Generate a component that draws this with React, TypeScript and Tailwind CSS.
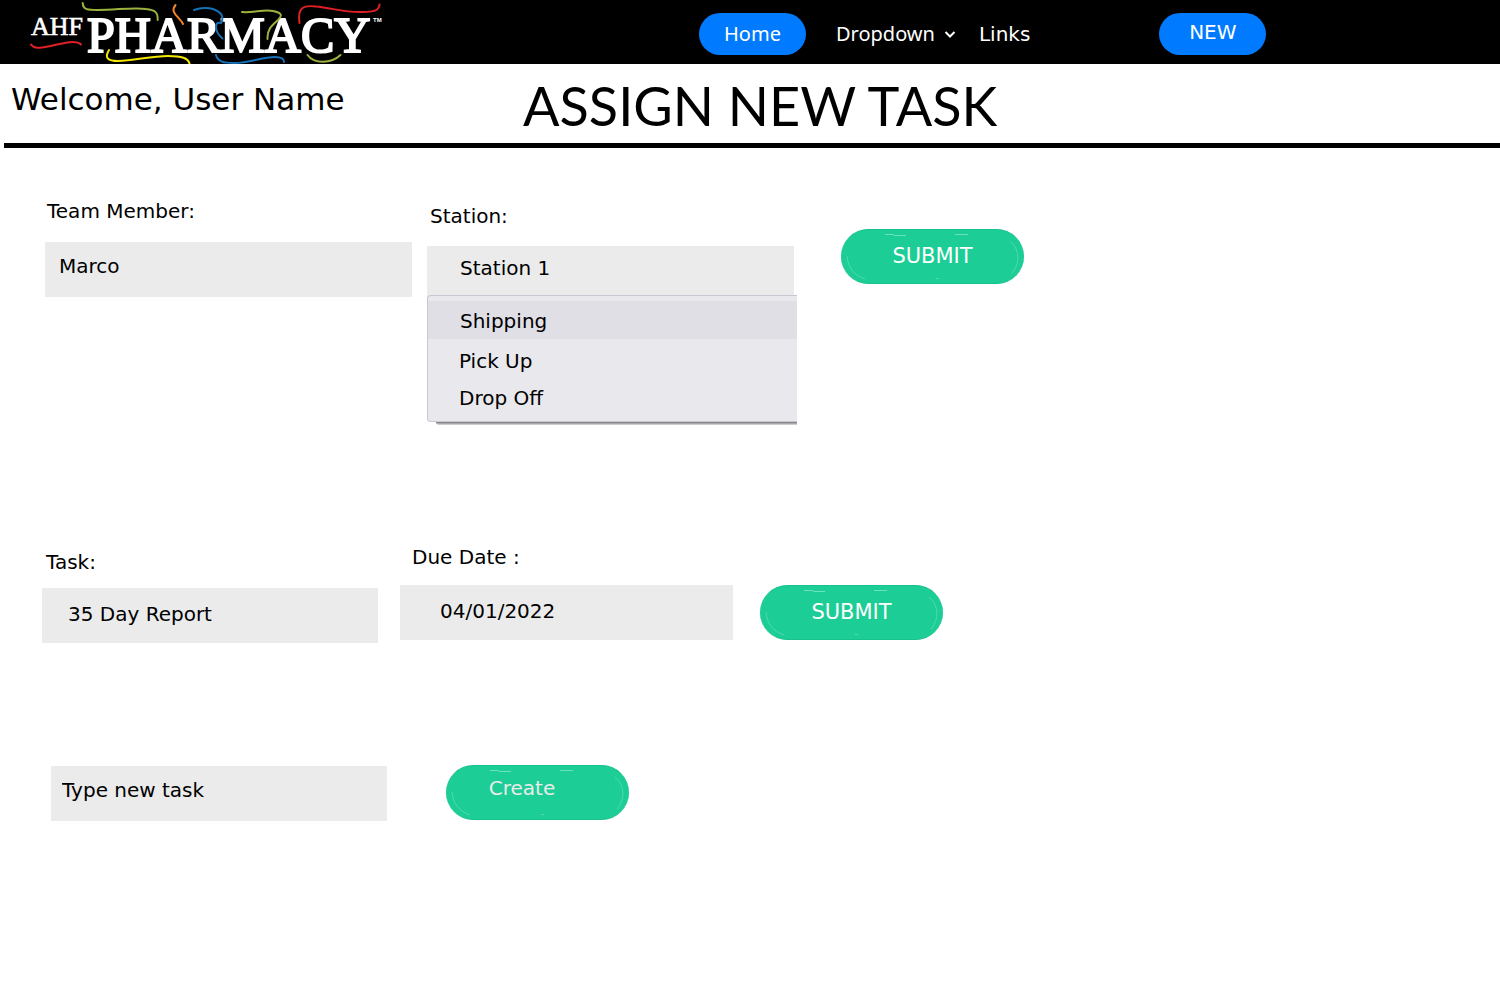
import type { ReactNode } from "react";

function Logo() {
  return (
    <svg
      role="img"
      aria-label="AHF Pharmacy"
      viewBox="0 0 360 64"
      className="h-16 w-[360px] shrink-0"
      fill="none"
      strokeLinecap="round"
      strokeWidth="2"
    >
      <g fill="#fff" stroke="#fff" fontFamily="'Liberation Serif', serif">
        <text x="1" y="35" fontSize="26" strokeWidth="0.6">AHF</text>
        <text x="57" y="52" fontSize="50" strokeWidth="2">PHARMACY</text>
      </g>
      <text x="343" y="22" fontSize="6" fontWeight="700" fill="#fff" fontFamily="'Liberation Sans', sans-serif">TM</text>
      <path stroke="#9bb23c" d="M52.700 3C53 10 58 10 68 10C86 10 104 7 116 9C125 10 128 12 127.700 20" />
      <path stroke="#e01f26" d="M1 44.500C4 49 10 48 18 46.500C30 44 45 39 51 44.500" />
      <path stroke="#f3e600" d="M79 50C74 58 78 61 88 61C104 61 120 56 138 56C152 56 158 58 159.500 63.500" />
      <path stroke="#f08326" d="M145.500 5C139 13 150 17 153 24" />
      <path stroke="#1672b8" d="M164 10C174 6 186 8 191 14C194 19 192 21 191 23C184 21 184 31 192.500 38.500" />
      <path stroke="#9bb23c" d="M212 12C223 13 234 9 243 11C253 13 252 16 248 20C241 26 237 30 237.500 39" />
      <path stroke="#e01f26" d="M269.500 23C267 7 274 5 286 6.500C302 8 316 13 333 12C343 12 349 11 349.500 4.500" />
      <path stroke="#1672b8" d="M186 55C188 62 194 63 204 63C220 63 232 57 245 57C251 57 254 58 254 62" />
      <path stroke="#9bb23c" d="M277.500 55C284 64 301 64 310.500 55" />
    </svg>
  );
}

function GreenButton({ children, className = "" }: { children: ReactNode; className?: string }) {
  return (
    <button
      type="button"
      className={`relative h-[55px] w-[183px] shrink-0 rounded-full border-y border-[#19c28c] bg-[#1ccd96] leading-6 ${className}`}
    >
      {children}
      <svg
        aria-hidden="true"
        viewBox="0 0 183 55"
        className="pointer-events-none absolute inset-x-0 -top-px h-[55px] w-full"
        fill="none"
        stroke="#7fe6c5"
        strokeWidth="1"
      >
        <path strokeOpacity="0.8" d="M44 5.500H53M53 6.500H65M114 5.500H127" />
        <path strokeOpacity="0.5" d="M6 27C7 39 13 46 24 50M169 12C178 19 180 34 171 44M95 49.500H98" />
      </svg>
    </button>
  );
}

function Field({
  id,
  label,
  value,
  className = "",
  labelClass = "",
  inputClass = "",
}: {
  id: string;
  label: string;
  value: string;
  className?: string;
  labelClass?: string;
  inputClass?: string;
}) {
  return (
    <div className={`flex min-w-0 flex-col ${className}`}>
      <label htmlFor={id} className={`text-xl leading-6 ${labelClass}`}>
        {label}
      </label>
      <input
        id={id}
        type="text"
        defaultValue={value}
        className={`h-[55px] w-full bg-[#ebebeb] text-xl leading-6 outline-none ${inputClass}`}
      />
    </div>
  );
}

export default function App() {
  return (
    <div className="min-h-screen bg-white font-['DejaVu_Sans',sans-serif] text-black">
      <header className="flex h-16 items-center bg-black pl-[30px] text-xl text-white">
        <Logo />
        <nav className="ml-[309px] flex flex-1 items-center pt-1">
          <a
            href="#home"
            className="flex h-[42px] w-[107px] shrink-0 items-center justify-center rounded-full bg-[#007bff] font-['Noto_Sans',sans-serif]"
          >
            Home
          </a>
          <button type="button" className="ml-[30px] flex items-center gap-2 font-['Noto_Sans',sans-serif]">
            Dropdown
            <svg aria-hidden="true" viewBox="0 0 14 14" className="size-3.5" fill="none" stroke="#fff" strokeWidth="2">
              <path d="M2.500 5L7 9.500L11.500 5" />
            </svg>
          </button>
          <a href="#links" className="ml-[22px]">
            Links
          </a>
          <a
            href="#new"
            className="ml-[129px] flex h-[42px] w-[107px] shrink-0 items-center justify-center rounded-full bg-[#007bff] pb-1"
          >
            NEW
          </a>
        </nav>
      </header>

      <div className="ml-1 flex h-[84px] items-start border-b-[5px] border-black">
        <p className="ml-[7px] w-[512px] pt-4 text-[31px] leading-[38px]">Welcome, User Name</p>
        <h1 className="pt-1.5 font-['Lato',sans-serif] text-[54px] leading-[72px]">ASSIGN NEW TASK</h1>
      </div>

      <main>
        <form className="flex items-start pt-[51px] pl-[45px]">
          <Field
            id="member"
            label="Team Member:"
            value="Marco"
            className="w-[367px]"
            labelClass="mb-[19px] pl-0.5"
            inputClass="pl-3.5 pb-2"
          />
          <div className="relative mt-[5px] ml-[15px] flex w-[367px] flex-col">
            <label htmlFor="station" className="mb-[18px] pl-[3px] text-xl leading-6">
              Station:
            </label>
            <button
              id="station"
              type="button"
              aria-haspopup="listbox"
              aria-expanded="true"
              className="h-[55px] w-full bg-[#ebebeb] pb-3 pl-[33px] text-left text-xl leading-6"
            >
              Station 1
            </button>
            <ul
              role="listbox"
              aria-label="Station"
              className="absolute top-[91px] left-0 flex h-[127px] w-[370px] flex-col rounded-l border border-r-0 border-[#c9c8d2] bg-[#e9e8ed] pt-[5px] text-xl leading-6"
            >
              <li role="option" aria-selected="true" className="h-[38px] bg-[#e0dfe6] pt-2 pl-8">
                Shipping
              </li>
              <li role="option" aria-selected="false" className="pt-2.5 pl-[31px]">
                Pick Up
              </li>
              <li role="option" aria-selected="false" className="pt-[13px] pl-[31px]">
                Drop Off
              </li>
              <li
                role="presentation"
                className="absolute top-[126px] right-0 left-2 h-[3px] rounded-bl bg-linear-to-b from-[#777] to-[#ddd]"
              />
            </ul>
          </div>
          <GreenButton className="mt-[30px] ml-[47px] pb-0.5 text-[21px] text-white">SUBMIT</GreenButton>
        </form>

        <form className="flex items-start pt-[244px] pl-[42px]">
          <Field
            id="task"
            label="Task:"
            value="35 Day Report"
            className="mt-[5px] w-[336px]"
            labelClass="mb-3.5 pl-1"
            inputClass="pl-[26px] pb-1"
          />
          <Field
            id="due"
            label="Due Date :"
            value="04/01/2022"
            className="ml-[22px] w-[333px]"
            labelClass="mb-4 pl-3"
            inputClass="pl-10 pb-1"
          />
          <GreenButton className="mt-10 ml-[27px] pb-0.5 text-[21px] text-white">SUBMIT</GreenButton>
        </form>

        <form className="flex items-start pt-[122px] pl-[51px]">
          <input
            aria-label="New task"
            placeholder="Type new task"
            className="mt-px h-[55px] w-[336px] min-w-0 bg-[#ebebeb] pb-2 pl-[11px] text-xl leading-6 outline-none placeholder:text-black placeholder:opacity-100"
          />
          <GreenButton className="ml-[59px] pr-[31px] pb-2.5 text-xl text-[#ebebeb]">Create</GreenButton>
        </form>
      </main>
    </div>
  );
}
